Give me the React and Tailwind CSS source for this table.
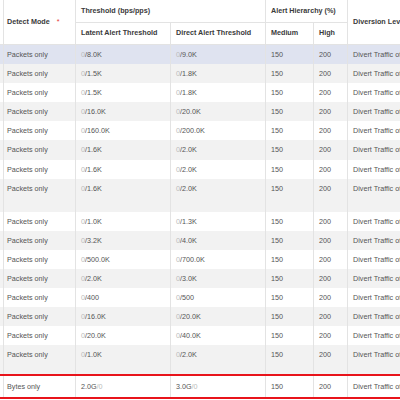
import React from "react";

const rows = [
  { m: "Packets only", a: ["0", "/8.0K"], b: ["0", "/9.0K"], bg: "bg-[#dfe3f0]" },
  { m: "Packets only", a: ["0", "/1.5K"], b: ["0", "/1.8K"], bg: "bg-[#f2f2f2]" },
  { m: "Packets only", a: ["0", "/1.5K"], b: ["0", "/1.8K"], bg: "bg-white" },
  { m: "Packets only", a: ["0", "/16.0K"], b: ["0", "/20.0K"], bg: "bg-[#f2f2f2]" },
  { m: "Packets only", a: ["0", "/160.0K"], b: ["0", "/200.0K"], bg: "bg-white" },
  { m: "Packets only", a: ["0", "/1.6K"], b: ["0", "/2.0K"], bg: "bg-[#f2f2f2]" },
  { m: "Packets only", a: ["0", "/1.6K"], b: ["0", "/2.0K"], bg: "bg-white" },
  { m: "Packets only", a: ["0", "/1.6K"], b: ["0", "/2.0K"], bg: "bg-[#f2f2f2]", tall: "h-[33px]" },
  { m: "Packets only", a: ["0", "/1.0K"], b: ["0", "/1.3K"], bg: "bg-white" },
  { m: "Packets only", a: ["0", "/3.2K"], b: ["0", "/4.0K"], bg: "bg-[#f2f2f2]" },
  { m: "Packets only", a: ["0", "/500.0K"], b: ["0", "/700.0K"], bg: "bg-white" },
  { m: "Packets only", a: ["0", "/2.0K"], b: ["0", "/3.0K"], bg: "bg-[#f2f2f2]" },
  { m: "Packets only", a: ["0", "/400"], b: ["0", "/500"], bg: "bg-white" },
  { m: "Packets only", a: ["0", "/16.0K"], b: ["0", "/20.0K"], bg: "bg-[#f2f2f2]" },
  { m: "Packets only", a: ["0", "/20.0K"], b: ["0", "/40.0K"], bg: "bg-white" },
  { m: "Packets only", a: ["0", "/1.0K"], b: ["0", "/2.0K"], bg: "bg-[#f2f2f2]", tall: "h-[29px]" },
];

const cell = "shrink-0 border-r border-[#e3e3e3] pl-[5px] leading-[19.1px] whitespace-nowrap overflow-hidden";
const first = "shrink-0 border-r border-[#e3e3e3] pl-[3px] leading-[19.1px] whitespace-nowrap overflow-hidden";

function Pair({ v }) {
  return (
    <span>
      <span className="text-[#bbbbbb]">{v[0]}</span>
      <span>{v[1]}</span>
    </span>
  );
}

function Row({ r }) {
  return (
    <div className={`flex items-start ${r.tall || "h-[19.1px]"} ${r.bg}`}>
      <div className="shrink-0 w-[4px] h-full border-r border-[#e3e3e3]" />
      <div className={`${first} w-[72px] h-full`}>{r.m}</div>
      <div className={`${cell} w-[95px] h-full`}><Pair v={r.a} /></div>
      <div className={`${cell} w-[95px] h-full`}><Pair v={r.b} /></div>
      <div className={`${cell} w-[48px] h-full`}>150</div>
      <div className={`${cell} w-[34px] h-full`}>200</div>
      <div className={`${cell} w-[200px] h-full`}>Divert Traffic of Protected Object</div>
    </div>
  );
}

export default function App() {
  return (
    <div className="w-[400px] h-[400px] overflow-hidden bg-white text-[7.2px] text-[#555] font-['Liberation_Sans',Arial,sans-serif]">
      <div className="w-[600px]">
        <div className="grid grid-cols-[4px_72px_95px_95px_48px_34px_200px] grid-rows-[23px_22px] bg-white font-bold text-[#3a3a3a]">
          <div className="row-span-2 border-r border-b border-[#e3e3e3]" />
          <div className="row-span-2 border-r border-b border-[#e3e3e3] pl-[3px] flex items-center">
            Detect Mode<span className="text-[#e53935] ml-[7px] font-normal">*</span>
          </div>
          <div className="col-span-2 border-r border-b border-[#e3e3e3] pl-[5px] flex items-center">
            Threshold (bps/pps)
          </div>
          <div className="col-span-2 border-r border-b border-[#e3e3e3] pl-[5px] flex items-center">
            Alert Hierarchy (%)
          </div>
          <div className="row-span-2 border-r border-b border-[#e3e3e3] pl-[5px] flex items-center whitespace-nowrap">
            Diversion Level
          </div>
          <div className="border-r border-b border-[#e3e3e3] pl-[5px] flex items-center">Latent Alert Threshold</div>
          <div className="border-r border-b border-[#e3e3e3] pl-[5px] flex items-center">Direct Alert Threshold</div>
          <div className="border-r border-b border-[#e3e3e3] pl-[5px] flex items-center">Medium</div>
          <div className="border-r border-b border-[#e3e3e3] pl-[5px] flex items-center">High</div>
        </div>
        {rows.map((r, i) => (
          <Row key={i} r={r} />
        ))}
        <div className="flex items-center h-[25px] bg-white border-y-2 border-[#e8141b]">
          <div className="shrink-0 w-[4px] h-full border-r border-[#e3e3e3]" />
          <div className={`${first} w-[72px] h-full flex items-center`}>Bytes only</div>
          <div className={`${cell} w-[95px] h-full flex items-center`}><span>2.0G<span className="text-[#bbbbbb]">/0</span></span></div>
          <div className={`${cell} w-[95px] h-full flex items-center`}><span>3.0G<span className="text-[#bbbbbb]">/0</span></span></div>
          <div className={`${cell} w-[48px] h-full flex items-center`}>150</div>
          <div className={`${cell} w-[34px] h-full flex items-center`}>200</div>
          <div className={`${cell} w-[200px] h-full flex items-center`}>Divert Traffic of Protected Object</div>
        </div>
      </div>
    </div>
  );
}
